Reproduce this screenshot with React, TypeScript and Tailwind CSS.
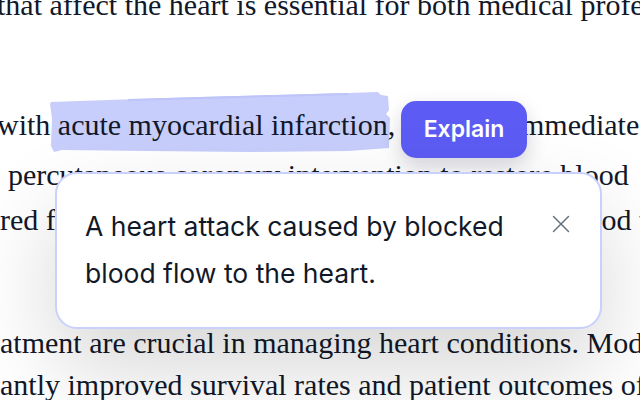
import { X } from "lucide-react";

const serif = { fontFamily: '"Liberation Serif", "DejaVu Serif", serif' };

function Highlight() {
  // brush-stroke marker behind the selected words
  return (
    <svg
      className="absolute left-[48px] top-[88px]"
      width="346"
      height="68"
      viewBox="0 0 346 68"
    >
      <path
        d="M3 14 L60 12 L150 9 L230 7 L300 5 L330 4 L333 7 L340 8 L341 22 L338 26 L342 30 L341 60 L300 63 L200 64 L100 63 L14 62 L6 64 L3 58 L4 30 L2 16 Z"
        fill="#c7cefb"
      />
      <path d="M80 11 L300 5 L300 7 L80 13 Z" fill="#bcc4f8" />
    </svg>
  );
}

export default function App() {
  return (
    <div className="relative w-[640px] h-[400px] overflow-hidden bg-white">
      <Highlight />

      <div
        className="relative text-[30px] leading-[40px] text-[#121829] whitespace-nowrap"
        style={serif}
      >
        <div className="-mt-[15px] -ml-[3px]">
          that affect the heart is essential for both medical professionals
        </div>
        <div className="mt-[80px] -ml-[3px]">
          with acute myocardial infarction, the team immediate treatment
        </div>
        <div className="mt-[10px] ml-[8px]">
          percutaneous coronary intervention to restore blood
        </div>
        <div className="mt-[5px]">
          red flow is a main goal in the acute care of the blood to the
        </div>
        <div className="mt-[83px]">
          atment are crucial in managing heart conditions. Modern
        </div>
        <div className="mt-[2px]">
          antly improved survival rates and patient outcomes of
        </div>
      </div>

      {/* selection action */}
      <button
        className="absolute left-[401px] top-[101px] w-[126px] h-[57px] rounded-[15px] bg-[#5c5cf4] text-white text-[23px] font-semibold shadow-[0_8px_20px_rgba(20,20,60,0.18)]"
        style={{ fontFamily: "Inter, sans-serif" }}
      >
        Explain
      </button>

      {/* explanation popover */}
      <div
        className="absolute left-[55px] top-[172px] w-[547px] h-[157px] rounded-[22px] border-2 border-[#c8d0fb] bg-white shadow-[0_40px_90px_rgba(0,0,0,0.16)] flex items-start justify-between pl-[28px] pr-[24px] pt-[29px]"
        style={{ fontFamily: "Inter, sans-serif" }}
      >
        <p className="text-[26.5px] leading-[47px] text-[#111827] w-[440px]">
          A heart attack caused by blocked blood flow to the heart.
        </p>
        <X className="mt-[6px] w-[30px] h-[30px] text-[#6b7280]" strokeWidth={1.2} />
      </div>
    </div>
  );
}
